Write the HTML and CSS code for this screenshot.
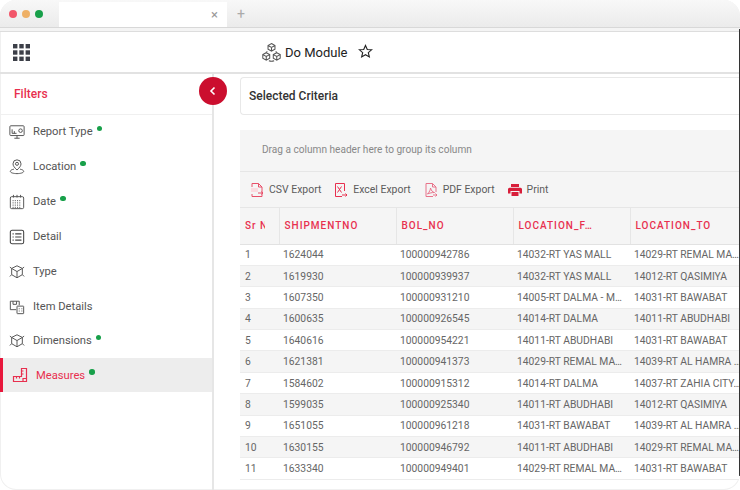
FILE: index.html
```html
<!DOCTYPE html>
<html lang="en">
<head>
<meta charset="utf-8">
<title>Do Module</title>
<link rel="stylesheet" href="styles.css">
</head>
<body>
<div class="window">
  <header class="chrome">
    <div class="lights"><i class="light red"></i><i class="light amber"></i><i class="light green"></i></div>
    <div class="tab"><span class="tab-x">×</span></div>
    <span class="tab-plus">+</span>
  </header>
  <div class="topbar">
    <svg class="apps" viewBox="0 0 17 17" width="17" height="17"><g fill="#3c3f48"><rect width="4.4" height="4.4"/><rect x="6.3" width="4.4" height="4.4"/><rect x="12.6" width="4.4" height="4.4"/><rect y="6.3" width="4.4" height="4.4"/><rect x="6.3" y="6.3" width="4.4" height="4.4"/><rect x="12.6" y="6.3" width="4.4" height="4.4"/><rect y="12.6" width="4.4" height="4.4"/><rect x="6.3" y="12.6" width="4.4" height="4.4"/><rect x="12.6" y="12.6" width="4.4" height="4.4"/></g></svg>
    <div class="title">
      <svg viewBox="0 0 20 20" width="21" height="21" fill="none" stroke="#555" stroke-width="1"><path d="M10 1.500l3.300 1.800v3.500L10 8.600 6.700 6.800V3.300zM6.700 3.300L10 5.100l3.300-1.800M10 5.100v3.500"/><path d="M5 10.200l3.300 1.800v3.500L5 17.300l-3.300-1.800V12zM1.700 12L5 13.800 8.300 12M5 13.800v3.500"/><path d="M15 10.200l3.300 1.800v3.500L15 17.300l-3.300-1.800V12zM11.700 12l3.300 1.800 3.300-1.800M15 13.800v3.500"/><path d="M7.500 17.800c1.500.6 3.500.6 5 0M6 9l-1 1M14 9l1 1"/></svg>
      <span>Do Module</span>
      <svg class="star" viewBox="0 0 16 16" width="15" height="15" fill="none" stroke="#222" stroke-width="1.200"><path d="M8 1.500l1.900 4.300 4.600.4-3.500 3 1.100 4.600L8 11.400l-4.100 2.400L5 9.200l-3.500-3 4.600-.4z"/></svg>
    </div>
  </div>
  <div class="body">
    <aside class="sidebar">
      <div class="filters"><span>Filters</span>
        <button class="collapse" aria-label="Collapse"><svg viewBox="0 0 10 10" width="10" height="10" fill="none" stroke="#fff" stroke-width="1.600"><path d="M6.500 1.500L3 5l3.500 3.500"/></svg></button>
      </div>
      <nav class="nav">
        <a class="item"><svg viewBox="0 0 18 18" width="16" height="16" fill="none" stroke="#555" stroke-width="1.100"><rect x="1" y="2" width="16" height="11" rx="1"/><path d="M6 16h6M9 13v3M3.500 10.500V6M3.500 10.500h5M6 10.500V8"/><circle cx="13" cy="7.500" r="2"/></svg><span>Report Type</span><i class="dot"></i></a>
        <a class="item"><svg viewBox="0 0 18 18" width="16" height="17" fill="none" stroke="#555" stroke-width="1.100"><path d="M9 13C6 10 4.500 8.300 4.500 6a4.500 4.500 0 019 0c0 2.300-1.500 4-4.500 7z"/><circle cx="9" cy="6" r="1.700"/><path d="M5.500 12C3 12.500 1.500 13.400 1.500 14.500 1.500 16 5 17 9 17s7.500-1 7.500-2.500c0-1.100-1.500-2-4-2.500"/></svg><span>Location</span><i class="dot"></i></a>
        <a class="item"><svg viewBox="0 0 18 18" width="16" height="16" fill="none" stroke="#555" stroke-width="1.100"><rect x="1.500" y="3" width="15" height="13.500" rx="1.500"/><path d="M5 1v3M9 1v3M13 1v3"/><path d="M4 7.500h10M4 10h10M4 12.500h10M4 15h10" stroke-dasharray="1.200 1.300"/></svg><span>Date</span><i class="dot"></i></a>
        <a class="item"><svg viewBox="0 0 18 18" width="16" height="16" fill="none" stroke="#444" stroke-width="1.200"><rect x="1.500" y="1.500" width="15" height="15" rx="2"/><path d="M7 5.500h7M7 9h7M7 12.500h7M4 5.500h1.300M4 9h1.300M4 12.500h1.300"/></svg><span>Detail</span></a>
        <a class="item"><svg viewBox="0 0 18 18" width="16" height="16" fill="none" stroke="#555" stroke-width="1.100"><path d="M9 2l6 3v7l-6 3.500L3 12V5zM3 5l6 3.500L15 5M9 8.500v7"/><path d="M1 3.500L3 5M17 3.500L15 5M1 14l2-2M17 14l-2-2"/></svg><span>Type</span></a>
        <a class="item"><svg viewBox="0 0 18 18" width="16" height="16" fill="none" stroke="#555" stroke-width="1.100"><path d="M8 12H1.500V2.500h10V7M4.500 2.500v3.500h4V2.500"/><rect x="9" y="8" width="7.500" height="8.500" rx=".5"/><path d="M11 11h1M14 11h1M11 13.500h1M14 13.500h1"/></svg><span>Item Details</span></a>
        <a class="item short"><svg viewBox="0 0 18 18" width="16" height="16" fill="none" stroke="#555" stroke-width="1.100"><path d="M9 2l6 3v7l-6 3.500L3 12V5zM3 5l6 3.500L15 5M9 8.500v7"/><path d="M1 3.500L3 5M17 3.500L15 5M1 14l2-2M17 14l-2-2"/></svg><span>Dimensions</span><i class="dot"></i></a>
        <a class="item active"><svg viewBox="0 0 16 16" width="16" height="16" fill="none" stroke="#e8304f" stroke-width="1.200"><path d="M9.500 1.500h5v13H1.500v-5h8zM4.500 9.500v2M7.500 9.500v2M9.500 4h2M9.500 7h2"/><path d="M11 14.500v-3h3.500"/></svg><span>Measures</span><i class="dot"></i></a>
      </nav>
    </aside>
    <main class="content">
      <div class="criteria">Selected Criteria</div>
      <section class="grid">
        <div class="group">Drag a column header here to group its column</div>
        <div class="tools">
          <a class="tool"><svg viewBox="0 0 14 16" width="14" height="16" fill="none" stroke="#e8506a" stroke-width="1"><path d="M2 5V1.500h6.500L12 5v9.500H2V12M8.500 1.500V5H12"/><rect x="1" y="6" width="7" height="4" fill="#fbdbe0" stroke="none"/><path d="M8 11h5M11.500 9.500L13 11l-1.500 1.500"/></svg><span>CSV Export</span></a>
          <a class="tool"><svg viewBox="0 0 14 16" width="14" height="16" fill="none" stroke="#e8304f" stroke-width="1"><path d="M8 14.500H1.500v-13h9V9M3.500 4.500l4 6M7.500 4.500l-4 6"/><path d="M8 13h5M11.500 11.500L13 13l-1.500 1.500"/></svg><span>Excel Export</span></a>
          <a class="tool"><svg viewBox="0 0 14 16" width="14" height="16" fill="none" stroke="#e8738a" stroke-width="1"><path d="M9 14.500H2v-13h6.500L12 5v5M8.500 1.500V5H12M3.500 12C5.500 10 6.500 7.500 6.500 6c1 3 2 4 4 4.500-2.500 0-5 .5-7 1.500z"/><path d="M9 13h4M11.500 11.500L13 13l-1.500 1.500"/></svg><span>PDF Export</span></a>
          <a class="tool"><svg viewBox="0 0 14 14" width="14" height="14"><path fill="#d81e3a" d="M3 1h8v3H3zM1.500 4.800h11A1.500 1.500 0 0114 6.300V10.500h-2.500V8h-9v2.500H0V6.300a1.500 1.500 0 011.500-1.500zM3.500 9h7v4h-7z"/></svg><span>Print</span></a>
        </div>
        <table class="table">
          <colgroup><col class="c0"><col class="c1"><col class="c2"><col class="c3"><col class="c4"></colgroup>
          <thead><tr><th><span class="clip">Sr No</span></th><th>SHIPMENTNO</th><th>BOL_NO</th><th>LOCATION_F…</th><th>LOCATION_TO</th></tr></thead>
          <tbody>
            <tr><td>1</td><td>1624044</td><td>100000942786</td><td>14032-RT YAS MALL</td><td>14029-RT REMAL MA…</td></tr>
            <tr><td>2</td><td>1619930</td><td>100000939937</td><td>14032-RT YAS MALL</td><td>14012-RT QASIMIYA</td></tr>
            <tr><td>3</td><td>1607350</td><td>100000931210</td><td>14005-RT DALMA - M…</td><td>14031-RT BAWABAT</td></tr>
            <tr><td>4</td><td>1600635</td><td>100000926545</td><td>14014-RT DALMA</td><td>14011-RT ABUDHABI</td></tr>
            <tr><td>5</td><td>1640616</td><td>100000954221</td><td>14011-RT ABUDHABI</td><td>14031-RT BAWABAT</td></tr>
            <tr><td>6</td><td>1621381</td><td>100000941373</td><td>14029-RT REMAL MA…</td><td>14039-RT AL HAMRA …</td></tr>
            <tr><td>7</td><td>1584602</td><td>100000915312</td><td>14014-RT DALMA</td><td>14037-RT ZAHIA CITY…</td></tr>
            <tr><td>8</td><td>1599035</td><td>100000925340</td><td>14011-RT ABUDHABI</td><td>14012-RT QASIMIYA</td></tr>
            <tr><td>9</td><td>1651055</td><td>100000961218</td><td>14031-RT BAWABAT</td><td>14039-RT AL HAMRA …</td></tr>
            <tr><td>10</td><td>1630155</td><td>100000946792</td><td>14011-RT ABUDHABI</td><td>14029-RT REMAL MA…</td></tr>
            <tr><td>11</td><td>1633340</td><td>100000949401</td><td>14029-RT REMAL MA…</td><td>14031-RT BAWABAT</td></tr>
          </tbody>
        </table>
      </section>
    </main>
  </div>
</div>
</body>
</html>
```
FILE: styles.css
```css
* { box-sizing: border-box; }
html, body { margin: 0; height: 100%; }
body { width: 740px; height: 490px; overflow: hidden; background: #fff; font-family: Roboto, "Liberation Sans", sans-serif; color: #555; }
.window { position: relative; width: 740px; height: 490px; display: flex; flex-direction: column; overflow: hidden; background: #fff; border-radius: 16px; box-shadow: inset 0 0 0 1px #f0f0f0; }
.window::after { content: ""; position: absolute; right: 0; top: 29px; bottom: 14px; width: 1px; background: #333; }
.chrome { height: 32px; flex: none; display: flex; align-items: flex-start; background: linear-gradient(#f8f8f8, #e9e9e9); border-bottom: 1px solid #ddd; box-shadow: inset 0 -3px 0 #f4f4f4, inset 0 -4px 0 #d8d8d8; }
.lights { display: flex; gap: 5px; padding: 10px 0 0 9px; width: 59px; }
.light { width: 8px; height: 8px; border-radius: 50%; display: block; }
.red { background: #f2566a; }
.amber { background: #eeb066; }
.green { background: #18a04a; }
.tab { width: 168px; height: 25px; margin-top: 2px; background: #fff; display: flex; align-items: center; justify-content: flex-end; padding-right: 9px; }
.tab-x { font-size: 13px; color: #999; line-height: 1; }
.tab-plus { margin: 7px 0 0 10px; font-size: 14px; color: #aaa; line-height: 1; }
.topbar { height: 42px; flex: none; display: flex; align-items: center; padding-left: 13px; border-bottom: 2px solid #e2e2e2; }
.title { margin-left: 231px; display: flex; align-items: center; gap: 3px; font-size: 13px; font-weight: 400; color: #222; }
.star { margin-left: 7px; margin-top: -1px; }
.body { flex: 1; display: flex; min-height: 0; }
.sidebar { width: 214px; flex: none; border-right: 2px solid #e6e6e6; }
.filters { height: 41px; display: flex; align-items: center; padding-left: 14px; border-bottom: 1px solid #f0f0f0; color: #e8304f; font-size: 12px; font-weight: 500; position: relative; }
.collapse { position: absolute; right: -15px; top: 3px; width: 28px; height: 28px; border: 0; border-radius: 50%; background: #cb0e2e; padding: 0; display: flex; align-items: center; justify-content: center; }
.nav { display: flex; flex-direction: column; }
.item { height: 35px; display: flex; align-items: center; padding-left: 9px; gap: 8px; font-size: 11.200px; color: #555; }
.item:first-child { height: 34px; padding-bottom: 1px; }
.item.short { height: 34px; padding-bottom: 1px; }
.item svg { flex: none; }
.dot { width: 5.500px; height: 5.500px; border-radius: 50%; background: #18a04a; margin: -6px 0 0 -4px; }
.item.active { height: 34px; background: #ededed; border-left: 3px solid #e8173c; color: #e8304f; padding-left: 9px; }
.content { flex: 1; min-width: 0; padding: 3px 0 0 26px; }
.criteria { height: 38px; border: 1px solid #e8e8e8; border-right: 0; border-radius: 4px 0 0 4px; display: flex; align-items: center; padding-left: 8px; font-size: 12px; font-weight: 500; color: #333; }
.grid { margin-top: 15px; background: #f5f5f5; width: 500px; }
.group { height: 41.500px; padding: 0 0 2px 22px; display: flex; align-items: center; font-size: 10.100px; color: #888; border-bottom: 1px solid #e6e6e6; }
.tools { height: 36px; padding: 1px 0 0 10px; display: flex; align-items: center; gap: 13px; font-size: 10.450px; color: #5c5c5c; border-bottom: 1px solid #e6e6e6; }
.tool { display: flex; align-items: center; gap: 5px; }
.table { border-collapse: collapse; table-layout: fixed; width: 500px; font-size: 10.300px; }
.c0 { width: 39px; } .c1 { width: 117px; } .c2 { width: 117px; } .c3 { width: 117px; } .c4 { width: 110px; }
th { height: 36.500px; padding: 0 0 0 5px; text-align: left; color: #e8304f; font-size: 10px; font-weight: 500; letter-spacing: 1px; border-right: 1px solid #e6e6e6; border-bottom: 1px solid #e2e2e2; white-space: nowrap; overflow: hidden; }
th:last-child { border-right: 0; }
.clip { display: block; width: 20px; overflow: hidden; }
td { height: 21.400px; padding: 0 0 0 5px; white-space: nowrap; overflow: hidden; color: #666; border-bottom: 1px solid #ececec; background: #fff; }
td:nth-child(n+2) { padding-left: 4px; }
tr:nth-child(even) td { background: #f5f5f5; }
```
